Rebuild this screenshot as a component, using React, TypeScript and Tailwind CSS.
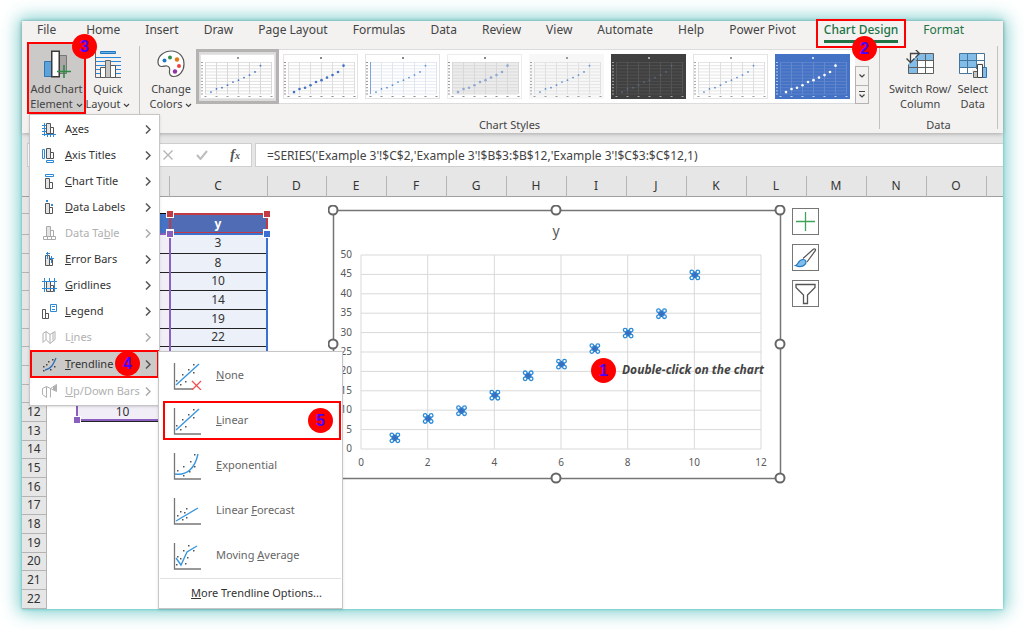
import React from 'react';

const TABS = ['File', 'Home', 'Insert', 'Draw', 'Page Layout', 'Formulas', 'Data', 'Review', 'View', 'Automate', 'Help', 'Power Pivot', 'Chart Design', 'Format'];

const POINTS = [
    [1, 3], [2, 8], [3, 10], [4, 14], [5, 19],
    [6, 22], [7, 26], [8, 30], [9, 35], [10, 45],
];

const COLUMNS = ['D', 'E', 'F', 'G', 'H', 'I', 'J', 'K', 'L', 'M', 'N', 'O'];

/* Gallery thumbnails, left to right */
const STYLES = [
    { name: 'Style 1', bg: '#ffffff', grid: '#d8d8d8', dot: '#4472c4', size: 1, label: '#999999' },
    { name: 'Style 2', bg: '#ffffff', grid: '#dedede', dot: '#4472c4', size: 2, label: '#888888' },
    { name: 'Style 3', bg: '#ffffff', grid: '#dfe6f0', dot: '#5b8fd0', size: 1, label: '#888888' },
    { name: 'Style 4', bg: '#ececec', grid: '#d8d8d8', dot: '#92a9d4', size: 2, label: '#888888' },
    { name: 'Style 5', bg: '#f7f7f7', grid: '#e0e0e0', dot: '#5b8fd0', size: 1, label: '#999999' },
    { name: 'Style 6', bg: '#404040', grid: '#545454', dot: '#5b6b80', size: 1, label: '#aaaaaa' },
    { name: 'Style 7', bg: '#ffffff', grid: '#dedede', dot: '#5b8fd0', size: 1, label: '#999999' },
    { name: 'Style 8', bg: '#4472c4', grid: '#6488cd', dot: '#ffffff', size: 2, label: '#c8d6ee' },
];

const Badge = ({ n, className }: { n: number; className: string }) => (
    <span className={`absolute z-30 flex h-[25px] w-[25px] items-center justify-center rounded-full bg-[#ff0000] font-['Liberation_Sans',sans-serif] text-base leading-none font-bold text-[#4a00ff] ${className}`}>
        {n}
    </span>
);

const Chevron = () => (
    <svg className="ml-[3px] inline-block h-[5px] w-[7px] align-middle" viewBox="0 0 7 5" fill="none" stroke="#444" strokeWidth="1.2">
        <path d="M1 1l2.5 2.5L6 1" />
    </svg>
);

const StyleThumb = ({ style }: { style: typeof STYLES[number] }) => (
    <svg className="block h-[45px] w-[75px]" viewBox="0 0 75 45">
        <rect x="0.5" y="0.5" width="74" height="44" fill={style.name === 'Style 4' ? '#ffffff' : style.bg} stroke={style.bg === '#ffffff' ? '#e4e4e4' : style.bg} />
        <rect x="5" y="8" width="66" height="32" fill={style.bg} />
        <path d="M37 3h2v2h-2z" fill={style.label} />
        {[0, 1, 2, 3, 4, 5, 6, 7, 8, 9, 10].map(i => (
            <g key={i}>
                <path d={`M5 ${8.5 + i * 3.15}h66`} stroke={style.grid} strokeWidth="0.8" />
                <path d={`M1 ${8.5 + i * 3.15}h2`} stroke={style.label} strokeWidth="0.9" />
            </g>
        ))}
        {[0, 1, 2, 3, 4, 5, 6].map(i => (
            <g key={i}>
                <path d={`M${5.5 + i * 11} 8v32`} stroke={style.grid} />
                <path d={`M${4.5 + i * 11} 42.5h2`} stroke={style.label} />
            </g>
        ))}
        {style.name === 'Style 3' && <path d="M5.5 8v32" stroke="#7ea3d8" />}
        {POINTS.map(([x, y]) => (
            <circle key={x} cx={5.5 + x * 5.5} cy={40 - y * 0.63} r={style.size === 2 ? 1.3 : 0.9} fill={style.dot} />
        ))}
    </svg>
);

/* ---------- Ribbon icons ---------- */

const AddElementIcon = () => (
    <svg className="h-7 w-7" viewBox="0 0 28 28" fill="none">
        <path d="M1.5 11.5h7v15h-7z" fill="#5ea2da" stroke="#2f75b5" />
        <path d="M16.5 5.5h7v18h-7z" fill="#a9a7a5" stroke="#797775" />
        <path d="M8.75 1.25h7.5v25.5h-7.500z" fill="#fff" stroke="#3b3a39" strokeWidth="1.5" />
        <path d="M21 15v13M14 21.5h14" stroke="#2e8b46" strokeWidth="1.6" />
    </svg>
);

const QuickLayoutIcon = () => (
    <svg className="h-7 w-7" viewBox="0 0 28 28" fill="none">
        <path d="M6.5 1.5h15v2h-15z" fill="#6fb1e4" stroke="#1e78c2" />
        <path d="M2 7.5h25M2 11.5h25M2 15.5h25M2 19.5h25M2 23.5h25" stroke="#2b88d8" />
        <path d="M1.5 2v25.5H27" stroke="#666" />
        <path d="M6.5 17.5h5v10h-5zM16.5 15.5h5v12h-5z" fill="#fff" stroke="#555" />
        <path d="M11.5 10.5h5v17h-5z" fill="#c8c6c4" stroke="#666" />
    </svg>
);

const PaletteIcon = () => (
    <svg className="h-7 w-7" viewBox="0 0 28 28" fill="none">
        <path d="M14.500 1C7 1 1 6 1 12c0 3 1.5 4.5 4 4.5 2 0 3-1 5-.5 2.500.7 3 3 2.500 5-.5 3 1 5.5 4 5.500C22.500 26.500 27 21 27 14 27 6.500 21.500 1 14.500 1z" fill="#fff" stroke="#555" strokeWidth="1.2" />
        <circle cx="7.5" cy="10.5" r="2" fill="#1e78c2" />
        <circle cx="13" cy="7.5" r="2" fill="#2f8f46" />
        <circle cx="20" cy="9.5" r="2.2" fill="#e07a10" />
        <circle cx="22" cy="16" r="2" fill="#f04040" />
        <circle cx="18" cy="21.5" r="2.2" fill="#9232a8" />
    </svg>
);

const SwitchIcon = () => (
    <svg className="h-7 w-8" viewBox="0 0 32 28" fill="none">
        <path d="M12.5 3.5h17v20h-25v-11z" fill="#fff" />
        <path d="M15 3.5h14.500v7H13v13H4.500v-10z" fill="#82bdea" />
        <path d="M16 3.5h13.500v20h-25v-9M4.500 17.500h25M12 10.500h17.500M13.500 8v15.500M21.500 3.500v20" stroke="#605e5c" />
        <path d="M6.500 12.500V3.500H15M2.500 8.500l4 4 4-4M11.500-.5L15.500 3.500l-4 4" stroke="#444" strokeWidth="1.3" />
    </svg>
);

const SelectDataIcon = () => (
    <svg className="h-7 w-[30px]" viewBox="0 0 30 28" fill="none">
        <path d="M1.500 3.500h25v20h-25z" fill="#fff" />
        <path d="M1.500 3.500h17v14H1.500z" fill="#82bdea" />
        <path d="M1.500 3.500h25v20h-25zM1.500 10.500h25M1.500 17.500h25M9.500 3.500v20M18.500 3.500v20" stroke="#46759c" />
        <path d="M14 19h5v-6h7v4h3v11H14z" fill="#f3f2f1" />
        <path d="M15.500 21.500h4v6h-4z" fill="#c8c6c4" stroke="#605e5c" />
        <path d="M24.500 17.500h4v10h-4z" fill="#82bdea" stroke="#2f75b5" />
        <path d="M19.500 14.500h5v13h-5z" fill="#fff" stroke="#444" />
    </svg>
);

/* ---------- Menu icons ---------- */

const Bars = ({ x = 0, y = 0, color = '#555' }: { x?: number; y?: number; color?: string }) => (
    <g transform={`translate(${x} ${y})`} stroke={color}>
        <path d="M0.5 0.5h4v10h-4z" fill="#e4e4e4" />
        <path d="M4.5 4.5h3v6h-3z" fill="#fff" />
    </g>
);

const MENU_ICONS: Record<string, React.ReactNode> = {
    axes: <><path d="M2.5 1v13M0 3.5h4M0 6.5h4M0 9.5h4M0 12.5h14M5.5 11v4M8.5 11v4M11.5 11v4" stroke="#2b88d8" /><Bars x={4} y={1} /></>,
    axisTitles: <><path d="M0.5 1.5h2v9h-2zM4.5 12.5h7v2h-7z" stroke="#2b88d8" fill="#fff" /><Bars x={4} y={0} /></>,
    chartTitle: <><path d="M3.5 0.5h8v2h-8z" stroke="#2b88d8" fill="#fff" /><Bars x={3} y={4} /></>,
    dataLabels: <><path d="M4 0h2v2H4zM9 4h2v2H9z" fill="#2b88d8" /><Bars x={3} y={3} /></>,
    dataTable: <><Bars x={4} y={0} color="#aaa" /><path d="M1.5 10.5h12v3h-12zM5.5 10.5v3M9.5 10.5v3" stroke="#aaa" /></>,
    errorBars: <><Bars x={3} y={3} /><path d="M5.5 0v7M4 1.5h4M9.5 4v7M8 6.5h4" stroke="#2b88d8" /></>,
    gridlines: <><Bars x={4} y={3} /><path d="M0 3.5h15M0 10.5h15M2.5 0v14M12.5 0v14M7.5 0v3" stroke="#2b88d8" /></>,
    legend: <><path d="M0.5 5.5h3v9h-3zM3.5 9.5h3v5h-3z" stroke="#555" fill="#fff" /><path d="M8.5 0.5h6v7h-6zM10 2.5h3M10 5.5h3" stroke="#2b88d8" /></>,
    lines: <path d="M1 3.5l3-2 4 3 5-3v8l-5 4-4-4-3 3zM4 1.5v8M8 4.5v9M11 2.5v8" stroke="#b0b0b0" />,
    trendline: <><path d="M3 13C9 12 11 8 14 1" stroke="#2b6cb8" strokeWidth="1.3" /><path d="M1 9h1.5v1.500H1zM4 7h1.500v1.500H4zM6 4h1.500v1.500H6zM10 2h1.500v1.500H10zM12 9h1.500v1.500H12zM8 12h1.500v1.500H8zM1 13h1.500v1.500H1z" fill="#444" /></>,
    upDown: <><path d="M0.5 4.5l4-2v11l-4-3zM4.5 2.5l4 2v9M8.5 4.5l6-4v7l-6-3" stroke="#b0b0b0" /><path d="M11 3l3.5-2v6L11 6z" fill="#b0b0b0" /></>,
};

const MENU = [
    { icon: 'axes', label: <>A<u>x</u>es</> },
    { icon: 'axisTitles', label: <><u>A</u>xis Titles</> },
    { icon: 'chartTitle', label: <><u>C</u>hart Title</> },
    { icon: 'dataLabels', label: <><u>D</u>ata Labels</> },
    { icon: 'dataTable', label: <>Data Ta<u>b</u>le</>, disabled: true },
    { icon: 'errorBars', label: <><u>E</u>rror Bars</> },
    { icon: 'gridlines', label: <><u>G</u>ridlines</> },
    { icon: 'legend', label: <><u>L</u>egend</> },
    { icon: 'lines', label: <>L<u>i</u>nes</>, disabled: true },
    { icon: 'trendline', label: <><u>T</u>rendline</>, active: true },
    { icon: 'upDown', label: <><u>U</u>p/Down Bars</>, disabled: true },
];

const TRENDLINES = [
    { id: 'none', label: <><u>N</u>one</>, line: 'M3 23L26 2', dots: [[3, 18], [7, 22], [9, 12], [12, 19], [15, 7], [20, 10], [20, 2]] },
    { id: 'linear', label: <><u>L</u>inear</>, line: 'M3 23L26 2', dots: [[3, 18], [7, 22], [9, 12], [12, 19], [15, 7], [20, 10], [20, 2]] },
    { id: 'exponential', label: <><u>E</u>xponential</>, line: 'M2 22C14 24 22 16 25 2', dots: [[4, 18], [10, 14], [10, 23], [16, 19], [17, 9], [21, 14], [21, 2]] },
    { id: 'forecast', label: <>Linear <u>F</u>orecast</>, line: 'M3 24L25 11', dots: [[4, 18], [7, 14], [9, 22], [11, 15], [13, 11], [13, 20]] },
    { id: 'average', label: <>Moving <u>A</u>verage</>, line: 'M3 16L8 23L14 10L24 4', dots: [[4, 14], [3, 22], [7, 16], [10, 8], [12, 21], [14, 15], [15, 3], [20, 8]] },
];

const TrendlineMenu = () => (
    <div className="absolute top-px left-[128px] z-20 flex h-[258px] w-[185px] flex-col border border-[#c6c6c6] bg-white shadow-sm">
        <div className="flex flex-col pt-px">
            {TRENDLINES.map(t => (
                <button key={t.id} className="relative flex h-[45px] items-center gap-[14px] pl-[14px] text-left text-[11px] text-[#666]">
                    {t.id === 'linear' && <span className="absolute inset-x-px inset-y-[3px] border-2 border-[#ff0000] left-1" />}
                    <svg className="h-7 w-[29px]" viewBox="0 0 29 28" fill="none">
                        <path d={t.id === 'none' ? 'M1.5 1v26H20' : 'M1.5 1v26H28'} stroke="#777" strokeWidth="1.3" />
                        {t.dots.map(([x, y]) => <rect key={`${x}-${y}`} x={x} y={y} width="1.5" height="1.5" fill="#555" />)}
                        <path d={t.line} stroke="#3a96dd" strokeWidth="1.4" />
                        {t.id === 'none' && <path d="M19 19l9 9M28 19l-9 9" stroke="#f05050" strokeWidth="1.3" />}
                    </svg>
                    <span>{t.label}</span>
                    {t.id === 'linear' && <Badge n={5} className="right-[9px]" />}
                </button>
            ))}
        </div>
        <hr className="mx-px border-[#e1e1e1]" />
        <button className="flex-1 pl-3 text-[11px] text-[#333]"><u>M</u>ore Trendline Options...</button>
    </div>
);

const ElementMenu = () => (
    <div className="absolute top-[72px] left-[2px] z-20 w-[131px] border border-[#c6c6c6] bg-white py-px text-[11px] shadow-sm">
        {MENU.map(item => (
            <div key={item.icon} className="relative">
                <button
                    disabled={item.disabled}
                    className={`flex w-full items-center text-left ${item.active ? 'h-7 border-2 border-[#ff0000] bg-[#cccac8] pr-[6px] pl-[10px]' : 'h-[26px] pr-2 pl-3'} ${item.disabled ? 'text-[#b0b0b0]' : 'text-[#333]'}`}
                >
                    <svg className="mr-2 h-[15px] w-[15px] shrink-0" viewBox="0 0 15 15" fill="none">{MENU_ICONS[item.icon]}</svg>
                    <span className="flex-1 whitespace-nowrap">{item.label}</span>
                    <svg className="h-[9px] w-[6px] shrink-0" viewBox="0 0 6 9" fill="none" stroke={item.disabled ? '#aaa' : '#555'} strokeWidth="1.5">
                        <path d="M1 0.5l4 4-4 4" />
                    </svg>
                </button>
                {item.active && <Badge n={4} className="top-px left-[85px]" />}
                {item.active && <TrendlineMenu />}
            </div>
        ))}
    </div>
);

/* Two-line ribbon button */
const BigButton = ({ icon, children, className = 'border-transparent' }: { icon: React.ReactNode; children: React.ReactNode; className?: string }) => (
    <button className={`flex h-[72px] flex-col items-center border-2 pt-[6px] text-center ${className}`}>
        {icon}
        <span className="mt-[3px] text-[11px] leading-[15px] whitespace-nowrap">{children}</span>
    </button>
);

const Separator = () => <div className="mt-1 h-[83px] w-px shrink-0 bg-[#c3c1bf]" />;

const tabClass = (tab: string) => {
    if (tab === 'File') return 'mr-[5px]';
    if (tab === 'Chart Design') return 'ml-[3px] font-medium text-[#217346]';
    if (tab === 'Format') return 'text-[#217346]';
    return '';
};

const Ribbon = () => (
    <div className="relative z-20 bg-[#f3f2f1] text-[#444] shadow-[0_1px_4px_#a8a8a8]">
        <nav className="flex h-[18px] items-center gap-[25px] pl-[15px] text-xs">
            {TABS.map(tab => (
                <button key={tab} className={`relative whitespace-nowrap ${tabClass(tab)}`}>
                    {tab}
                    {tab === 'Chart Design' && (
                        <>
                            <span className="absolute -inset-x-[8px] -top-[3px] h-[29px] border-2 border-[#ff0000]" />
                            <span className="absolute inset-x-0 top-[18px] h-[3px] bg-[#217346]" />
                            <Badge n={2} className="top-[14px] left-[28px]" />
                        </>
                    )}
                </button>
            ))}
        </nav>

        <div className="flex h-[94px] pt-[3px] pl-[5px]">
            <div className="relative">
                <BigButton icon={<AddElementIcon />} className="w-[59px] border-[#ff0000] bg-[#cccac8]">
                    Add Chart<br />Element<Chevron />
                </BigButton>
                <Badge n={3} className="-top-[8px] left-[45px]" />
                <ElementMenu />
            </div>
            <BigButton icon={<QuickLayoutIcon />} className="w-[44px] border-transparent">
                Quick<br />Layout<Chevron />
            </BigButton>
            <div className="w-[9px]" />
            <Separator />

            <div className="flex flex-col justify-between">
                <div className="flex">
                    <BigButton icon={<PaletteIcon />} className="ml-2 w-[46px] border-transparent">
                        Change<br />Colors<Chevron />
                    </BigButton>
                    <div className="mt-[7px] ml-[2px] flex h-[55px]">
                        <div className="flex items-center gap-[7px] border-y border-[#dcdcdc] bg-white pr-[5px]">
                            {STYLES.map((s, i) => (
                                <button key={s.name} aria-label={s.name} className={i === 0 ? '-mr-[3px] border-[3px] border-[#b5b3b1] bg-[#dcdcdc] px-px py-[2px]' : ''}>
                                    <StyleThumb style={s} />
                                </button>
                            ))}
                        </div>
                        <div className="flex w-[14px] flex-col text-[#555]">
                            <button aria-label="Previous styles" className="flex-1" />
                            <button aria-label="Next styles" className="flex flex-1 items-center justify-center border border-[#b5b3b1]">
                                <svg className="h-1 w-[6px]" viewBox="0 0 6 4"><path d="M0.5 0.5L3 3L5.5 0.5" fill="none" stroke="#444" strokeWidth="1.2" /></svg>
                            </button>
                            <button aria-label="All styles" className="flex flex-1 items-center justify-center border border-t-0 border-[#b5b3b1]">
                                <svg className="h-[7px] w-[6px]" viewBox="0 0 6 7"><path d="M0 0.5h6M0.5 3.5L3 6L5.5 3.5" fill="none" stroke="#444" strokeWidth="1.2" /></svg>
                            </button>
                        </div>
                    </div>
                    <div className="w-[10px]" />
                </div>
                <div className="h-4 text-center text-[11px] leading-4">Chart Styles</div>
            </div>
            <Separator />

            <div className="flex flex-col justify-between">
                <div className="flex gap-[2px] px-[7px]">
                    <BigButton icon={<SwitchIcon />}>Switch Row/<br />Column</BigButton>
                    <BigButton icon={<SelectDataIcon />}>Select<br />Data</BigButton>
                </div>
                <div className="h-4 text-center text-[11px] leading-4">Data</div>
            </div>
            <Separator />
        </div>
    </div>
);

const FormulaBar = () => (
    <div className="flex gap-[3px] bg-[#e6e6e6] pt-[10px] pb-[9px] pl-[5px]">
        <div className="flex h-6 w-[225px] shrink-0 items-center justify-end border border-[#cfcfcf] bg-white pr-[11px]">
            <button aria-label="Cancel" className="mr-[23px]">
                <svg className="h-[10px] w-[10px]" viewBox="0 0 10 10"><path d="M0.5 0.5l9 9M9.5 0.5l-9 9" stroke="#b5b5b5" strokeWidth="1.4" /></svg>
            </button>
            <button aria-label="Enter" className="mr-[22px]">
                <svg className="h-[10px] w-3" viewBox="0 0 12 10"><path d="M1 5l3.5 4L11 1" fill="none" stroke="#bdbdbd" strokeWidth="2" /></svg>
            </button>
            <button aria-label="Insert function" className="font-['Liberation_Serif',serif] text-sm leading-none font-bold text-[#555] italic">
                f<span className="text-[10px]">x</span>
            </button>
        </div>
        <input
            aria-label="Formula"
            className="h-6 min-w-0 flex-1 border border-r-0 border-[#cfcfcf] bg-white pl-[11px] text-xs text-[#444] outline-none"
            defaultValue="=SERIES('Example 3'!$C$2,'Example 3'!$B$3:$B$12,'Example 3'!$C$3:$C$12,1)"
        />
    </div>
);

const rowHeight = (row: number) => {
    if (row === 1) return 'h-[17px]';
    if (row === 2) return 'h-[21px]';
    return row % 3 === 2 ? 'h-[18px]' : 'h-[19px]';
};

const Grid = () => (
    <table className="w-full table-fixed border-collapse text-center text-xs leading-none text-[#333]">
        <colgroup>
            <col className="w-6" />
            <col className="w-[30px]" />
            <col className="w-[93px]" />
            <col className="w-[98px]" />
            {COLUMNS.map(c => <col key={c} className={c === 'D' ? 'w-[59px]' : 'w-[60px]'} />)}
            <col />
        </colgroup>
        <thead>
            <tr className="h-5 border-b border-[#9f9f9f] bg-[#e6e6e6]">
                <th />
                {['A', 'B', 'C', ...COLUMNS].map(c => (
                    <th key={c} scope="col" className="border-r border-[#b4b4b4] p-0 font-normal">{c}</th>
                ))}
                <th />
            </tr>
        </thead>
        <tbody>
            {Array.from({ length: 22 }, (_, i) => i + 1).map(row => {
                const point = POINTS[row - 3];
                return (
                    <tr key={row} className={rowHeight(row)}>
                        <th scope="row" className="border-r border-b border-[#b4b4b4] bg-[#e6e6e6] p-0 font-normal">{row > 11 && row}</th>
                        <td />
                        {row === 2 && (
                            <>
                                <td className="border-t border-black bg-[#4472c4] p-0" />
                                <td className="border-t border-black bg-[#506cb5] p-0 font-bold text-white">y</td>
                            </>
                        )}
                        {point && (
                            <>
                                <td className="border-b border-[#222] bg-[#f1eef8] p-0">{row === 12 && point[0]}</td>
                                <td className="border-b border-[#222] bg-[#ebf0f9] p-0">{row < 9 && point[1]}</td>
                            </>
                        )}
                    </tr>
                );
            })}
        </tbody>
    </table>
);

/* Coloured outline around a referenced range */
const RangeOutline = ({ box, handle }: { box: string; handle: string }) => (
    <div className={`absolute border-2 ${box}`}>
        {['-top-1 -left-1', '-top-1 -right-1', '-bottom-1 -left-1', '-bottom-1 -right-1'].map(pos => (
            <span key={pos} className={`absolute h-[6px] w-[6px] outline outline-white ${pos} ${handle}`} />
        ))}
    </div>
);

const px = (x: number) => 33 + (x * 400) / 12;
const py = (y: number) => 244 - y * 3.88;

const Chart = () => (
    <div className="absolute top-[29px] left-[306px] h-[279px] w-[458px]">
        <svg className="block h-full w-full" viewBox="0 0 458 279" fontFamily="'Noto Sans', 'Open Sans', sans-serif">
            <rect x="5.5" y="5.5" width="447" height="268" fill="#fff" stroke="#767676" strokeWidth="1.5" />
            {[0, 5, 10, 15, 20, 25, 30, 35, 40, 45, 50].map(v => (
                <g key={v}>
                    <path d={`M33 ${py(v)}H433`} stroke="#d9d9d9" />
                    <text x="24" y={py(v) + 3} fontSize="10" fill="#595959" textAnchor="end">{v}</text>
                </g>
            ))}
            {[0, 2, 4, 6, 8, 10, 12].map(v => (
                <g key={v}>
                    <path d={`M${px(v)} 50V244`} stroke="#d9d9d9" />
                    <text x={px(v)} y="261" fontSize="10" fill="#595959" textAnchor="middle">{v}</text>
                </g>
            ))}
            <text x="228" y="31" fontSize="14" fill="#595959" textAnchor="middle">y</text>
            {POINTS.map(([x, y]) => (
                <g key={x} transform={`translate(${px(x) + 0.5} ${py(y) + 0.5})`}>
                    <circle r="3.4" fill="#3a6cc0" />
                    {[[-3, -3], [3, -3], [-3, 3], [3, 3]].map(([dx, dy]) => (
                        <circle key={`${dx}${dy}`} cx={dx} cy={dy} r="1.8" fill="#fff" stroke="#2b8ad6" strokeWidth="1.3" />
                    ))}
                </g>
            ))}
            {[[5, 5], [228, 5], [452, 5], [5, 139], [452, 139], [5, 273], [228, 273], [452, 273]].map(([x, y]) => (
                <circle key={`${x}-${y}`} cx={x} cy={y} r="4.5" fill="#fff" stroke="#666" strokeWidth="2" />
            ))}
        </svg>
        <Badge n={1} className="top-[153px] left-[263px]" />
        <span className="absolute top-[157px] left-[294px] text-xs leading-4 font-bold whitespace-nowrap text-[#444] italic">
            Double-click on the chart
        </span>
    </div>
);

const ChartButtons = () => (
    <div className="absolute top-8 left-[770px] flex flex-col gap-[9px]">
        <button aria-label="Chart Elements" className="h-[27px] w-[27px] border border-[#767676] bg-white">
            <svg viewBox="0 0 25 25"><path d="M12.500 3v19M3 12.500h19" stroke="#3fa35a" strokeWidth="1.3" /></svg>
        </button>
        <button aria-label="Chart Styles" className="h-[27px] w-[27px] border border-[#767676] bg-white">
            <svg viewBox="0 0 25 25" fill="none">
                <path d="M10 13.5L20 4.5c1.5-1.3 3.2-.5 2.3 1.2L14 17" fill="#fff" stroke="#555" strokeWidth="1.2" />
                <path d="M2.5 20.5c3-.5 2.5-6 7.5-6 3 0 4 3 2 5-2.5 2.5-6.5 2.5-9.5 1z" fill="#82bdea" stroke="#1e78c2" strokeWidth="1.2" />
            </svg>
        </button>
        <button aria-label="Chart Filters" className="h-[27px] w-[27px] border border-[#767676] bg-white">
            <svg viewBox="0 0 25 25"><path d="M3 3.5h19v3L14.5 14v8.5h-4V14L3 6.5z" fill="#fff" stroke="#555" strokeWidth="1.3" /></svg>
        </button>
    </div>
);

const App = () => (
    <div className="bg-white py-[21px] pr-[21px] pl-[22px] font-['Noto_Sans','Open_Sans',sans-serif]">
        <main className="relative bg-white shadow-[0_0_3px_#4cc0c0,0_0_17px_3px_#7accca]">
            <Ribbon />
            <FormulaBar />
            <div className="relative overflow-hidden">
                <Grid />
                <RangeOutline box="top-[37px] left-[147px] h-[21px] w-[99px] border-[#c23a44]" handle="bg-[#c23a44]" />
                <RangeOutline box="top-[57px] left-[147px] h-[188px] w-[99px] border-[#3b6fd0]" handle="bg-[#3b6fd0]" />
                <RangeOutline box="top-[57px] left-[54px] h-[188px] w-[95px] border-[#8a5fbf]" handle="bg-[#8a5fbf]" />
                <Chart />
                <ChartButtons />
            </div>
        </main>
    </div>
);

export default App;
